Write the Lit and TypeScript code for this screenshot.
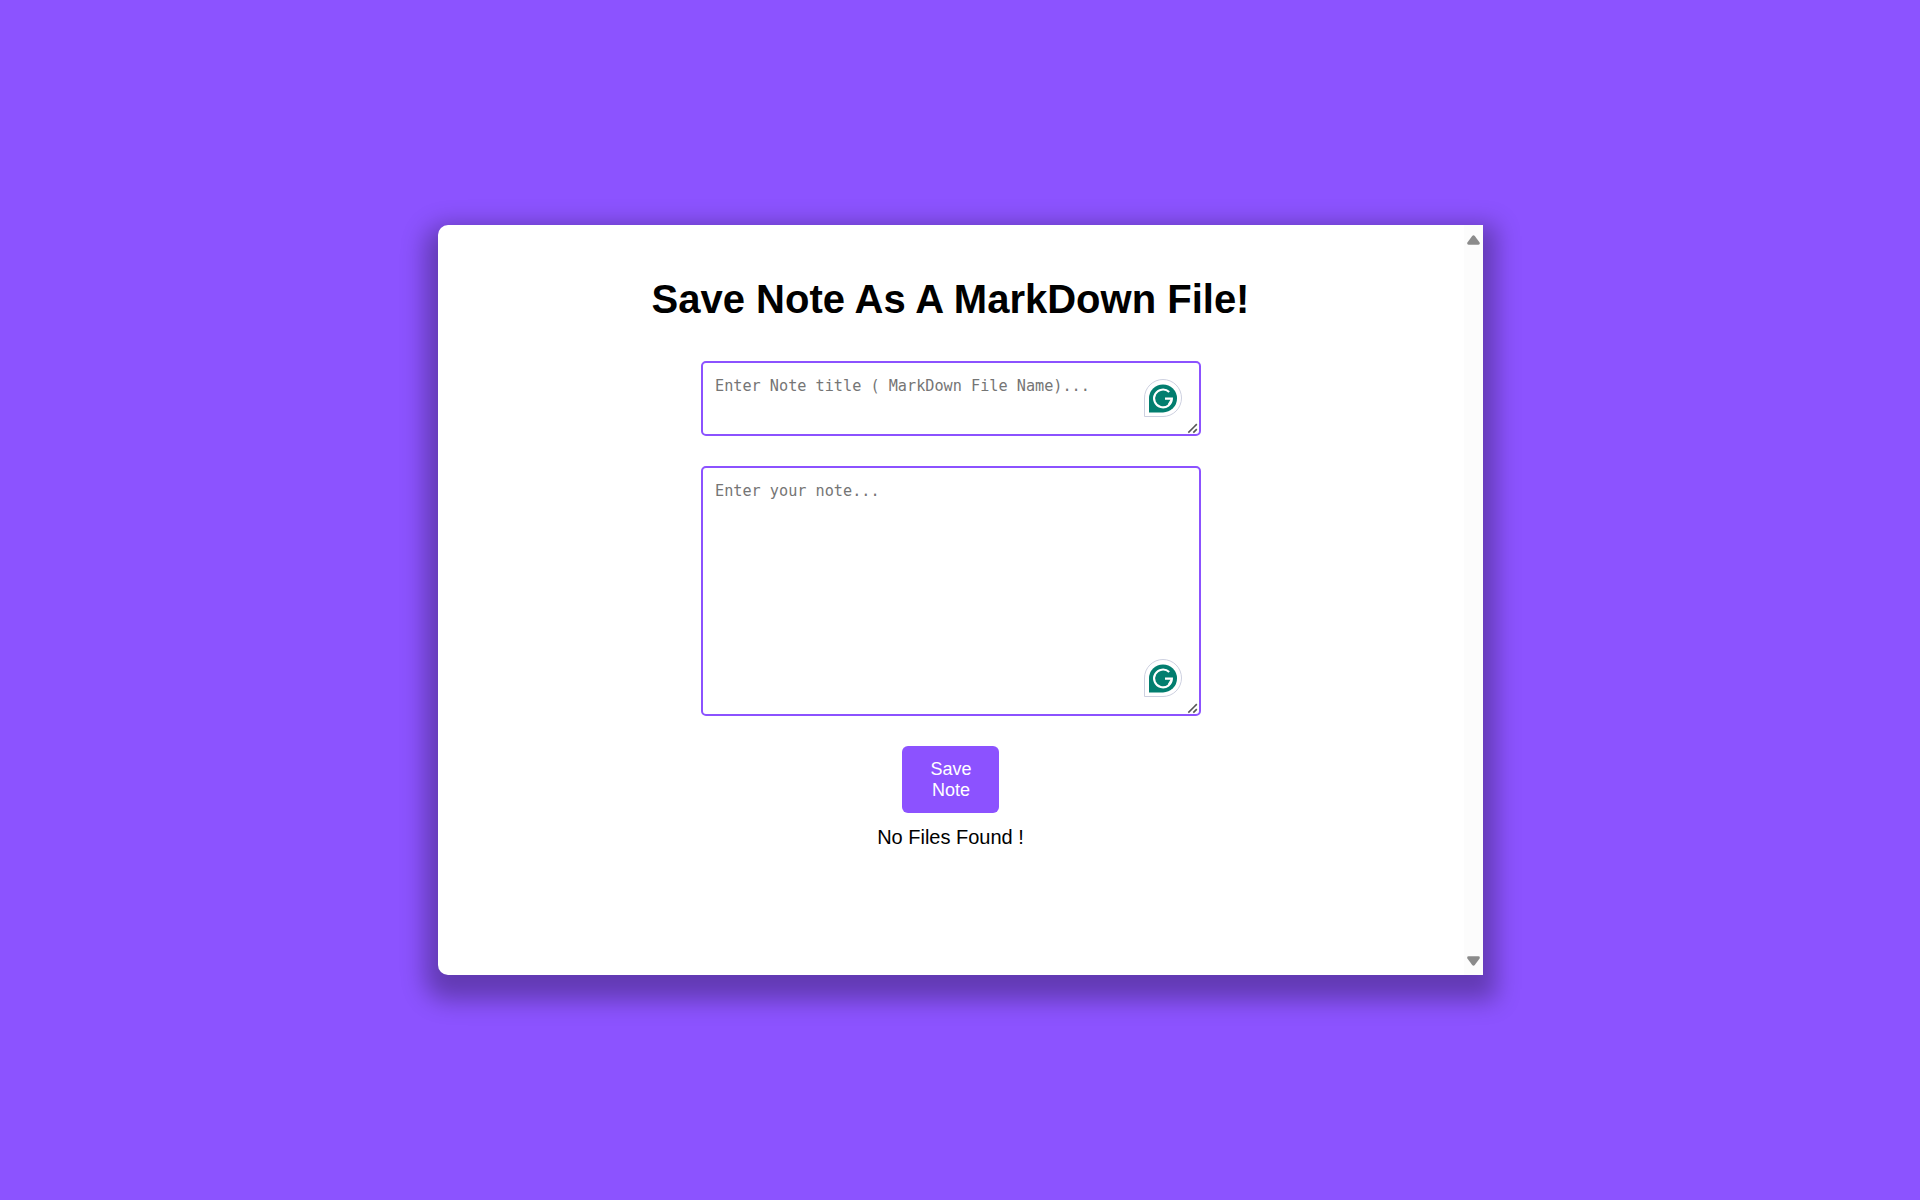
import { LitElement, html, css } from "lit";
import { customElement, property } from "lit/decorators.js";

@customElement("note-field")
class NoteField extends LitElement {
  @property() placeholder = "";

  static styles = css`
    :host {
      display: block;
      position: relative;
      box-sizing: border-box;
      width: 500px;
      border: 2px solid #8c52ff;
      border-radius: 5px;
      padding: 13px 12px;
      background: #fff;
    }
    .placeholder {
      font: 15.2px/20px "DejaVu Sans Mono", monospace;
      color: #757575;
      white-space: pre;
    }
    .badge {
      position: absolute;
      right: 17px;
      bottom: 17px;
      width: 38px;
      height: 38px;
    }
    .grip {
      position: absolute;
      right: 1px;
      bottom: 0;
      width: 11px;
      height: 11px;
    }
  `;

  render() {
    return html`
      <div class="placeholder">${this.placeholder}</div>
      <svg class="badge" viewBox="0 0 38 38">
        <path d="M.5 37.5V19A18.5 18.5 0 1 1 19 37.5Z" fill="#fff" stroke="#cdd0e0" />
        <g transform="translate(0 .4)">
          <path d="M5 33V19A14 14 0 1 1 19 33Z" fill="#027e6f" />
          <path d="M25.2 12.7A8.9 8.9 0 1 0 27.9 19.2H21" fill="none" stroke="#fff" stroke-width="2.1" />
          <path d="M28 19.2L24.3 25.2" fill="none" stroke="#fff" stroke-width="1.4" />
        </g>
      </svg>
      <svg class="grip" viewBox="0 0 11 11">
        <path d="M1.3 9.6L9.8 1.1M6.3 9.6L9.8 6.1" fill="none" stroke="#555" stroke-width="1.6" stroke-dasharray="8 0" />
      </svg>
    `;
  }
}

@customElement("app-root")
class AppRoot extends LitElement {
  static styles = css`
    :host {
      display: flex;
      align-items: center;
      justify-content: center;
      box-sizing: border-box;
      width: 100vw;
      height: 100vh;
      padding-left: 1px;
      overflow: hidden;
      background: #8c53ff;
      font-family: "Liberation Sans", Arial, sans-serif;
      color: #000;
    }
    .card {
      display: flex;
      width: 1045px;
      height: 750px;
      border-radius: 10px 0 0 10px;
      background: #fff;
      box-shadow: 0 12.5px 25px 12.5px rgba(0, 0, 0, 0.3);
    }
    .content {
      flex: 1;
      display: flex;
      flex-direction: column;
      align-items: center;
      padding-top: 51px;
    }
    .scrollbar {
      width: 19px;
      box-sizing: border-box;
      display: flex;
      flex-direction: column;
      align-items: center;
      justify-content: space-between;
      padding: 10px 0 9px;
      background: #fcfcfc;
    }
    .arrow {
      display: block;
      width: 13px;
      height: 10px;
      fill: #8b8b8b;
    }
    h1 {
      margin: 0 1px 0 0;
      font-size: 40px;
      line-height: 46px;
      font-weight: 700;
      white-space: nowrap;
    }
    .title {
      height: 75px;
      margin-top: 39px;
    }
    .note {
      height: 250px;
      margin-top: 30px;
    }
    button {
      width: 97px;
      height: 67px;
      margin: 30px 1px 0 0;
      padding: 0 19px 0 20px;
      border: 0;
      border-radius: 6px;
      background: #8c52ff;
      color: #fff;
      font: 18px/21px "Liberation Sans", Arial, sans-serif;
    }
    .empty {
      margin: 12px 1px 0 0;
      font-size: 20px;
      line-height: 24px;
    }
  `;

  render() {
    return html`
      <main class="card">
        <section class="content">
          <h1>Save Note As A MarkDown File!</h1>
          <note-field class="title" placeholder="Enter Note title ( MarkDown File Name)..."></note-field>
          <note-field class="note" placeholder="Enter your note..."></note-field>
          <button>Save Note</button>
          <div class="empty">No Files Found !</div>
        </section>
        <div class="scrollbar">
          <svg class="arrow" viewBox="0 0 13 10">
            <path d="M5.2.9Q6.5-.5 7.8.9L12.6 7.4Q13.4 9.6 11.4 9.7H1.6Q-.4 9.6.4 7.4Z" />
          </svg>
          <svg class="arrow" viewBox="0 0 13 10">
            <path d="M5.2 9.1Q6.5 10.5 7.8 9.1L12.6 2.6Q13.4.4 11.4.3H1.6Q-.4.4.4 2.6Z" />
          </svg>
        </div>
      </main>
    `;
  }
}
